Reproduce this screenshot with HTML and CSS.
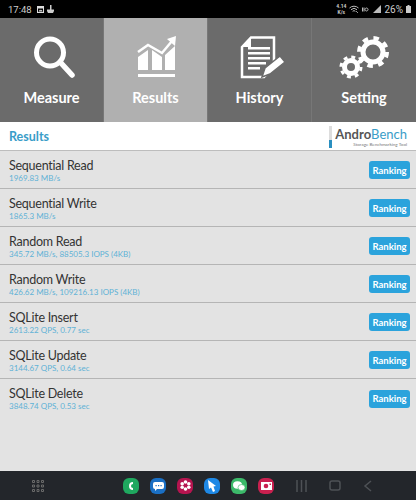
FILE: index.html

```html
<!DOCTYPE html>
<html lang="en">
<head>
    <meta charset="UTF-8">
    <meta name="viewport" content="width=device-width, initial-scale=1.0">
    <title>AndroBench</title>
    <link rel="stylesheet" href="styles.css">
</head>
<body>
    <!-- Status bar -->
    <div class="status-bar">
        <div class="status-left">
            <span class="time">17:48</span>
            <svg width="7" height="7" viewBox="0 0 7 7"><path d="M0 0h7v7H0z" fill="#ddd"/><path d="M1 2.500h5V6H1z" fill="#000"/><path d="M1.500 5.500l1.500-2 1 1 .7-.7 1 1.700z" fill="#ddd"/></svg>
            <svg width="7" height="8" viewBox="0 0 7 8"><path d="M3 0h1.500v4.500H7V6l-1 2H1L0 6V4.500h3z" fill="#ccc"/></svg>
        </div>
        <div class="status-right">
            <span class="speed">4.14<br>K/s</span>
            <svg width="10" height="9" viewBox="0 0 10 9" fill="none" stroke="#bbb"><path d="M.5 3a6.500 6.500 0 0 1 9 0M2 4.700a4.300 4.300 0 0 1 6 0M3.600 6.300a2 2 0 0 1 2.800 0"/><path d="M7 6l2 2" stroke-width=".8"/></svg>
            <svg width="7" height="5" viewBox="0 0 7 5" fill="none" stroke="#bbb"><path d="M.5.500v4M2 .5v4M4.500 1a1.500 1.500 0 1 0 .01 0"/></svg>
            <svg width="9" height="8" viewBox="0 0 9 8"><path d="M9 0v8H1z" fill="#bbb"/></svg>
            <span class="battery-text">26%</span>
            <svg width="5" height="8" viewBox="0 0 5 8"><path d="M1.500 0h2v1H5v7H0V1h1.500z" fill="#ccc"/></svg>
        </div>
    </div>

    <!-- Tabs -->
    <div class="tabs">
        <div class="tab">
            <svg class="tab-icon" width="44" height="44" viewBox="0 0 44 44">
                <circle cx="20" cy="16.500" r="13.500" fill="none" stroke="#fff" stroke-width="5"/>
                <path d="M31 27l11 12" stroke="#fff" stroke-width="5.500" stroke-linecap="round"/>
            </svg>
            <span>Measure</span>
        </div>
        <div class="tab active">
            <svg class="tab-icon" width="44" height="44" viewBox="0 0 44 44">
                <path d="M4 16l10-7 14 8L38 5" fill="none" stroke="#fff" stroke-width="2.500"/>
                <path d="M33 3l9-3-1 10z" fill="#fff"/>
                <path d="M4 21l10-7v20H4zM18 14l10 7v13H18zM31 19l10-9v24H31z" fill="#fff"/>
                <path d="M4 38h37v3H4z" fill="#fff"/>
            </svg>
            <span>Results</span>
        </div>
        <div class="tab">
            <svg class="tab-icon" width="44" height="44" viewBox="0 0 44 44">
                <path d="M4 11L13 1.500h23V30l-10 11H4z" fill="none" stroke="#fff" stroke-width="2.500"/>
                <path d="M4 11h9V1.500z" fill="#fff"/>
                <path d="M10 11h22v2.500H10zM10 16h22v2.500H10zM10 21h22v2.500H10zM10 26h18v2.500H10zM10 31h12v2.500H10z" fill="#fff"/>
                <path d="M24 41l3-9 15-12 5 6-15 12z" fill="#fff" stroke="#6b6b6b" stroke-width="1.500"/>
            </svg>
            <span>History</span>
        </div>
        <div class="tab">
            <svg class="tab-icon" width="44" height="44" viewBox="0 0 44 44">
                <circle cx="31" cy="16" r="10" fill="none" stroke="#fff" stroke-width="5"/>
                <circle cx="31" cy="16" r="14" fill="none" stroke="#fff" stroke-width="4" stroke-dasharray="5.500 5.500"/>
                <circle cx="9" cy="31" r="6.500" fill="none" stroke="#fff" stroke-width="5"/>
                <circle cx="9" cy="31" r="10" fill="none" stroke="#fff" stroke-width="3" stroke-dasharray="3.900 3.950"/>
            </svg>
            <span>Setting</span>
        </div>
    </div>

    <!-- Title -->
    <div class="title-bar">
        <span class="title">Results</span>
        <div class="logo">
            <div class="logo-bar"></div>
            <div class="logo-text">
                <div class="logo-name"><b>Andro</b><span>Bench</span></div>
                <div class="logo-sub">Storage Benchmarking Tool</div>
            </div>
        </div>
    </div>

    <!-- Results -->
    <div class="results">
        <div class="row">
            <div><div class="name">Sequential Read</div><div class="value">1969.83 MB/s</div></div>
            <button>Ranking</button>
        </div>
        <div class="row">
            <div><div class="name">Sequential Write</div><div class="value">1865.3 MB/s</div></div>
            <button>Ranking</button>
        </div>
        <div class="row">
            <div><div class="name">Random Read</div><div class="value">345.72 MB/s, 88505.3 IOPS (4KB)</div></div>
            <button>Ranking</button>
        </div>
        <div class="row">
            <div><div class="name">Random Write</div><div class="value">426.62 MB/s, 109216.13 IOPS (4KB)</div></div>
            <button>Ranking</button>
        </div>
        <div class="row">
            <div><div class="name">SQLite Insert</div><div class="value">2613.22 QPS, 0.77 sec</div></div>
            <button>Ranking</button>
        </div>
        <div class="row">
            <div><div class="name">SQLite Update</div><div class="value">3144.67 QPS, 0.64 sec</div></div>
            <button>Ranking</button>
        </div>
        <div class="row">
            <div><div class="name">SQLite Delete</div><div class="value">3848.74 QPS, 0.53 sec</div></div>
            <button>Ranking</button>
        </div>
    </div>

    <!-- Bottom navigation -->
    <div class="nav-bar">
        <svg class="apps" width="12" height="12" viewBox="0 0 12 12" fill="none" stroke="#6a6a6a"><path d="M.5.500h2v2h-2zM5 .5h2v2H5zM9.500.500h2v2h-2zM.5 5h2v2h-2zM5 5h2v2H5zM9.500 5h2v2h-2zM.5 9.500h2v2h-2zM5 9.500h2v2H5zM9.500 9.500h2v2h-2z"/></svg>
        <div class="dock">
            <div class="app green"><svg width="10" height="10" viewBox="0 0 10 10"><path d="M7 1a4 4 0 0 0 0 8V7a2 2 0 0 1 0-4z" fill="#fff"/></svg></div>
            <div class="app blue"><svg width="11" height="10" viewBox="0 0 11 10"><path d="M2 1h7a2 2 0 0 1 2 2v3a2 2 0 0 1-2 2H4L2 10V8a2 2 0 0 1-2-2V3a2 2 0 0 1 2-2z" fill="#fff"/><path d="M2.500 4h1.200v1.200H2.500zM5 4h1.200v1.200H5zM7.500 4h1.200v1.200H7.500z" fill="#1a6fc4"/></svg></div>
            <div class="app pink"><svg width="11" height="11" viewBox="0 0 11 11" fill="#fff"><circle cx="5.500" cy="2" r="1.800"/><circle cx="5.500" cy="9" r="1.800"/><circle cx="2.200" cy="3.800" r="1.800"/><circle cx="8.800" cy="3.800" r="1.800"/><circle cx="2.200" cy="7.200" r="1.800"/><circle cx="8.800" cy="7.200" r="1.800"/></svg></div>
            <div class="app sky"><svg width="10" height="12" viewBox="0 0 10 12"><path d="M1 0l8 6-2.500.5L8 11l-2 1-2-4.500L2 9z" fill="#fff"/></svg></div>
            <div class="app wechat"><svg width="12" height="10" viewBox="0 0 12 10" fill="#fff"><ellipse cx="4.500" cy="4" rx="4.500" ry="3.700"/><ellipse cx="8.500" cy="6.500" rx="3.500" ry="3" stroke="#3cb96a" stroke-width=".6"/></svg></div>
            <div class="app red"><svg width="11" height="9" viewBox="0 0 11 9"><path d="M0 1h11v8H0z" fill="#fff"/><circle cx="5" cy="5" r="2.300" fill="#c9204f"/><path d="M8.500 2.500h1.500V4H8.500z" fill="#c9204f"/></svg></div>
        </div>
        <div class="nav-buttons">
            <svg width="11" height="12" viewBox="0 0 11 12" fill="none" stroke="#4e5156" stroke-width="1.500"><path d="M1 0v12M5.500 0v12M10 0v12"/></svg>
            <svg width="12" height="11" viewBox="0 0 12 11" fill="none" stroke="#4e5156" stroke-width="1.500"><rect x="1" y="1" width="10" height="9" rx="2"/></svg>
            <svg width="9" height="12" viewBox="0 0 9 12" fill="none" stroke="#4e5156" stroke-width="1.500"><path d="M8 1L2 6l6 5"/></svg>
        </div>
    </div>
</body>
</html>
```

FILE: styles.css

```css
body {
    font-family: Lato, Arial, sans-serif;
    margin: 0;
    padding: 0;
    width: 416px;
    height: 500px;
    overflow: hidden;
    display: flex;
    flex-direction: column;
    background: #e3e3e3;
}

.status-bar {
    height: 18px;
    background: #000;
    color: #ccc;
    display: flex;
    justify-content: space-between;
    align-items: center;
    padding: 0 5px 0 8px;
    font-family: Roboto, sans-serif;
    font-size: 9.500px;
}

.status-left,
.status-right {
    display: flex;
    align-items: center;
    gap: 3px;
}

.time {
    margin-right: 2px;
}

.speed {
    font-size: 5px;
    line-height: 6px;
    text-align: center;
    font-weight: bold;
}

.battery-text {
    font-size: 10px;
}

.tabs {
    height: 104px;
    display: flex;
    background: #6b6b6b;
}

.tab {
    width: 104px;
    box-sizing: border-box;
    border-right: 1px solid #777;
    display: flex;
    flex-direction: column;
    align-items: center;
    padding-top: 18px;
    color: #fff;
    font-size: 14.500px;
    font-weight: bold;
}

.tab:last-child {
    border-right: none;
}

.tab.active {
    background: #b0b0b0;
}

.tab-icon {
    overflow: visible;
    margin-bottom: 9px;
}

.title-bar {
    height: 28px;
    background: #fff;
    display: flex;
    justify-content: space-between;
    align-items: center;
    padding: 0 9px 0 9px;
}

.title {
    color: #3a9dc8;
    font-size: 12.500px;
    font-weight: bold;
}

.logo {
    display: flex;
    gap: 3px;
    align-items: stretch;
    padding-top: 1px;
}

.logo-bar {
    width: 3px;
    background: linear-gradient(#ddd 65%, #2a8fc0 65%);
}

.logo-name {
    font-size: 13px;
    line-height: 16px;
    color: #3a9dc8;
}

.logo-name b {
    color: #555;
}

.logo-sub {
    font-size: 4.500px;
    line-height: 6px;
    color: #777;
    text-align: right;
}

.results {
    flex: 1;
    border-top: 1px solid #bdbdbd;
}

.row {
    height: 38px;
    box-sizing: border-box;
    border-bottom: 1px solid #b5b5b5;
    display: flex;
    justify-content: space-between;
    align-items: center;
    padding: 1px 6px 0 9px;
}

.row:last-child {
    border-bottom: none;
}

.name {
    color: #333;
    font-size: 12.500px;
    letter-spacing: -0.25px;
    line-height: 15px;
}

.value {
    color: #5fb2d6;
    font-size: 8px;
    line-height: 10px;
}

button {
    width: 41px;
    height: 18px;
    padding: 0;
    background-color: #2ba3dc;
    color: white;
    border: none;
    border-radius: 3px;
    font-family: inherit;
    font-size: 9.500px;
    font-weight: bold;
}

.nav-bar {
    height: 29px;
    background: #23262b;
    display: flex;
    align-items: center;
    padding: 0 0 0 32px;
}

.dock {
    display: flex;
    gap: 11px;
    margin-left: 79px;
}

.app {
    width: 16px;
    height: 16px;
    border-radius: 6px;
    display: flex;
    align-items: center;
    justify-content: center;
}

.green { background: #1fa85f; }
.blue { background: #1a6fc4; }
.pink { background: #b5144f; }
.sky { background: #1e88e5; }
.wechat { background: #3cb96a; }
.red { background: #c9204f; }

.nav-buttons {
    display: flex;
    align-items: center;
    gap: 22px;
    margin-left: 22px;
}
```
